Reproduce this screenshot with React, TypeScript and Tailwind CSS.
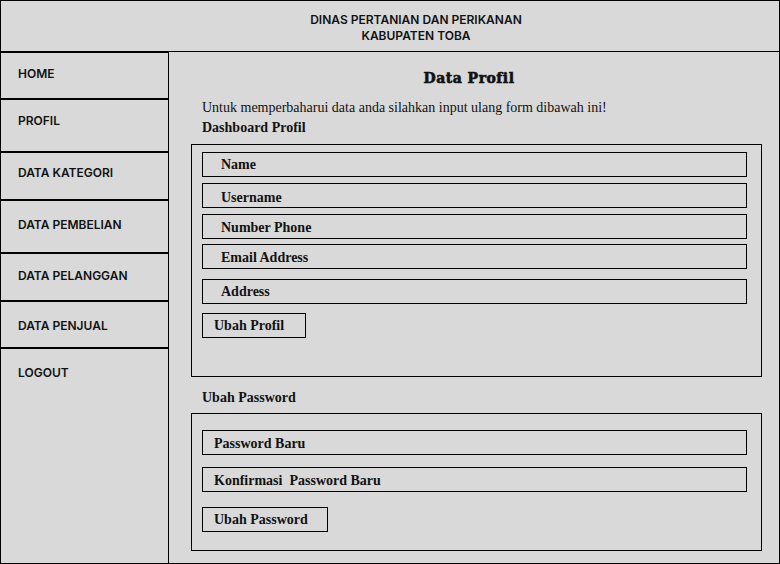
import React from "react";

const sans = { fontFamily: "Inter, 'Liberation Sans', sans-serif" };

const navItems: { label: string; cls: string }[] = [
  { label: "HOME", cls: "h-[47px] pt-[13px] border-b-2 border-black" },
  { label: "PROFIL", cls: "h-[53px] pt-[13px] border-b-2 border-black" },
  { label: "DATA KATEGORI", cls: "h-[48px] pt-[12px] border-b-2 border-black" },
  { label: "DATA PEMBELIAN", cls: "h-[53px] pt-[16px] border-b-2 border-black" },
  { label: "DATA PELANGGAN", cls: "h-[48px] pt-[14px] border-b-2 border-black" },
  { label: "DATA PENJUAL", cls: "h-[47px] pt-[16px] border-b-2 border-black" },
  { label: "LOGOUT", cls: "flex-1 pt-[16px]" },
];

function Field({ label, cls, pad }: { label: string; cls: string; pad: string }) {
  return (
    <div className={`h-[25px] w-[545px] border border-black flex items-center ${pad} ${cls}`}>
      <span className="font-bold text-[14px] leading-[20px]">{label}</span>
    </div>
  );
}

export default function App() {
  return (
    <div
      className="w-[780px] h-[564px] border border-black bg-[#d9d9d9] flex flex-col overflow-hidden text-[#111]"
      style={{ fontFamily: "'Liberation Serif', 'Times New Roman', serif" }}
    >
      <header
        className="h-[51px] shrink-0 border-b border-black text-center pt-[11px] pl-[52px] font-semibold text-[12px] leading-[16px]"
        style={sans}
      >
        <div>DINAS PERTANIAN DAN PERIKANAN</div>
        <div>KABUPATEN TOBA</div>
      </header>
      <div className="flex flex-1 min-h-0">
        <nav
          className="w-[168px] shrink-0 border-r border-t border-black flex flex-col font-semibold text-[12px] leading-[16px]"
          style={sans}
        >
          {navItems.map((n) => (
            <div key={n.label} className={`pl-[17px] ${n.cls}`}>
              {n.label}
            </div>
          ))}
        </nav>
        <main className="flex-1 flex flex-col pl-[22px]">
          <h1
            className="mt-[16px] mr-[32px] text-center font-bold text-[14px] leading-[20px] tracking-[0.5px] [font-variant-ligatures:none] [-webkit-text-stroke:0.6px_#111]"
            style={{ fontFamily: "'DejaVu Serif', serif" }}
          >
            Data Profil
          </h1>
          <p className="mt-[10px] ml-[11px] text-[14px] leading-[20px]">
            Untuk memperbaharui data anda silahkan input ulang form dibawah ini!
          </p>
          <p className="ml-[11px] font-bold text-[14px] leading-[20px]">Dashboard Profil</p>
          <section className="mt-[6px] w-[571px] h-[233px] border border-black pt-[7px] pl-[10px] flex flex-col">
            <Field label="Name" cls="pt-[1px]" pad="pl-[18px]" />
            <Field label="Username" cls="mt-[6px] pt-[4px]" pad="pl-[18px]" />
            <Field label="Number Phone" cls="mt-[6px] pt-[2px]" pad="pl-[18px]" />
            <Field label="Email Address" cls="mt-[5px] pt-[2px]" pad="pl-[18px]" />
            <Field label="Address" cls="mt-[10px] pt-[1px]" pad="pl-[18px]" />
            <div className="mt-[9px] h-[25px] w-[104px] border border-black flex items-center pl-[11px] pt-[1px]">
              <span className="font-bold text-[14px] leading-[20px]">Ubah Profil</span>
            </div>
          </section>
          <p className="mt-[11px] ml-[11px] font-bold text-[14px] leading-[20px]">Ubah Password</p>
          <section className="mt-[5px] w-[571px] h-[138px] border border-black pt-[16px] pl-[10px] flex flex-col">
            <Field label="Password Baru" cls="pt-[3px]" pad="pl-[11px]" />
            <Field label={"Konfirmasi\u00a0 Password Baru"} cls="mt-[12px] pt-[3px]" pad="pl-[11px]" />
            <div className="mt-[15px] h-[25px] w-[126px] border border-black flex items-center pl-[11px]">
              <span className="font-bold text-[14px] leading-[20px]">Ubah Password</span>
            </div>
          </section>
        </main>
      </div>
    </div>
  );
}
